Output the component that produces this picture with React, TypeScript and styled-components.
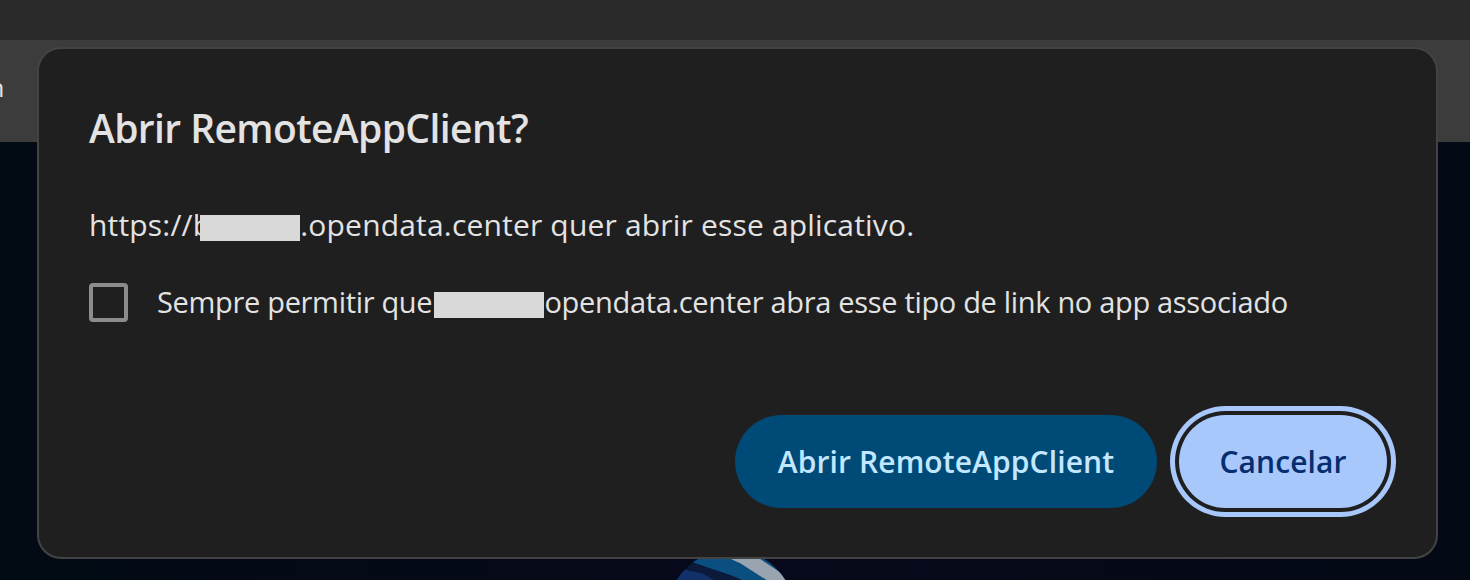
import React from "react";
import styled, { createGlobalStyle } from "styled-components";

const Global = createGlobalStyle`
  html, body { margin: 0; padding: 0; background: #050914; }
  body { font-family: "Open Sans", "Noto Sans", sans-serif; }
  #root { width: 1470px; height: 580px; overflow: hidden; position: relative; }
`;

const Browser = styled.div`
  width: 1470px;
  height: 580px;
  display: flex;
  flex-direction: column;
  position: relative;
  overflow: hidden;
`;

const TitleStrip = styled.div`
  height: 40px;
  background: #2a2a2a;
  flex: none;
`;

const Toolbar = styled.div`
  height: 102px;
  background: #3c3c3c;
  flex: none;
  display: flex;
  align-items: center;
  overflow: hidden;
`;

const TabText = styled.span`
  margin-left: -11px;
  margin-top: -8px;
  font-size: 25px;
  color: #e3e3e3;
`;

const PageContent = styled.div`
  flex: 1;
  background: linear-gradient(90deg, #020b14 0%, #07091a 50%, #040916 100%);
  display: flex;
  justify-content: center;
  padding-top: 404px;
  padding-right: 8px;
`;

const Logo = styled.svg`
  width: 136px;
  height: 136px;
  flex: none;
`;

const Dialog = styled.div`
  position: absolute;
  left: 37px;
  top: 47px;
  width: 1401px;
  height: 512px;
  box-sizing: border-box;
  background: #1f1f1f;
  border: 2px solid #434343;
  border-radius: 24px;
  padding: 55px 49px 0 50px;
  display: flex;
  flex-direction: column;
`;

const Title = styled.h1`
  margin: 0;
  font-size: 39px;
  line-height: 48px;
  font-weight: 600;
  color: #e3e3e3;
  letter-spacing: -0.6px;
`;

const Body = styled.p`
  margin: 53px 0 0;
  font-size: 30px;
  line-height: 40px;
  color: #e3e3e3;
  letter-spacing: 0.18px;
  white-space: nowrap;
`;

const Redact = styled.span<{ $w: number; $overlap?: number }>`
  display: inline-block;
  width: ${(p) => p.$w}px;
  height: 26px;
  background: #d9d9d9;
  vertical-align: -5px;
  margin-left: ${(p) => -(p.$overlap ?? 0)}px;
  position: relative;
`;

const CheckRow = styled.label`
  margin-top: 37px;
  display: flex;
  align-items: center;
  gap: 29px;
  font-size: 29px;
  line-height: 40px;
  color: #e3e3e3;
  letter-spacing: -0.32px;
  white-space: nowrap;
`;

const Box = styled.span`
  width: 39px;
  height: 39px;
  box-sizing: border-box;
  border: 4px solid #8c8c8c;
  border-radius: 4px;
  flex: none;
`;

const Actions = styled.div`
  margin-top: 93px;
  display: flex;
  justify-content: flex-end;
  gap: 22px;
`;

const Button = styled.button<{ $w: number; $variant: "primary" | "secondary" }>`
  width: ${(p) => p.$w}px;
  height: 93px;
  border: none;
  border-radius: 47px;
  padding: 0;
  font-family: "Open Sans", "Noto Sans", sans-serif;
  font-size: 30px;
  font-weight: 600;
  letter-spacing: 0.1px;
  cursor: pointer;
  background: ${(p) => (p.$variant === "primary" ? "#004a77" : "#a8c7fa")};
  color: ${(p) => (p.$variant === "primary" ? "#c2e7ff" : "#062e6f")};
  box-shadow: ${(p) =>
    p.$variant === "secondary" ? "0 0 0 4px #1f1f1f, 0 0 0 9px #a8c7fa" : "none"};
`;

export default function App() {
  return (
    <>
      <Global />
      <Browser>
        <TitleStrip />
        <Toolbar>
          <TabText>n</TabText>
        </Toolbar>
        <PageContent>
          <Logo viewBox="0 0 140 140">
            <defs>
              <clipPath id="c">
                <circle cx="70" cy="70" r="66" />
              </clipPath>
            </defs>
            <circle cx="70" cy="70" r="66" fill="#0b1a3a" />
            <g clipPath="url(#c)">
              <path d="M10 10 L70 30 L140 60 L140 0 L20 0 Z" fill="#0a4f80" />
              <path d="M40 0 L80 18 L130 50 L140 40 L95 10 L60 0 Z" fill="#9aa4b0" />
              <path d="M0 20 L40 28 L80 50 L70 56 L30 36 L0 34 Z" fill="#12316a" />
            </g>
          </Logo>
        </PageContent>
        <Dialog role="dialog">
          <Title>Abrir RemoteAppClient?</Title>
          <Body>
            https://b<Redact $w={100} $overlap={11} />.opendata.center quer abrir esse aplicativo.
          </Body>
          <CheckRow>
            <Box />
            <span>
              Sempre permitir que <Redact $w={110} $overlap={5} />opendata.center abra esse tipo de link no app associado
            </span>
          </CheckRow>
          <Actions>
            <Button $w={422} $variant="primary">Abrir RemoteAppClient</Button>
            <Button $w={208} $variant="secondary">Cancelar</Button>
          </Actions>
        </Dialog>
      </Browser>
    </>
  );
}
